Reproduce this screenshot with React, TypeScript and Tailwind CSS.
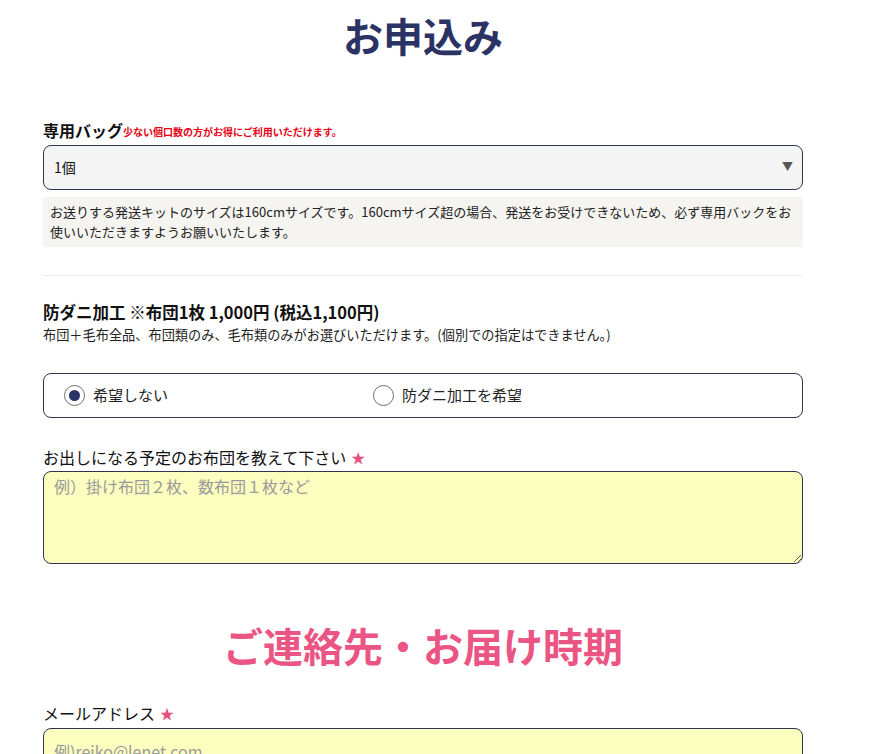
import React from "react";

const jp = "font-['Noto_Sans_CJK_JP','Noto_Sans',sans-serif]";

function Star() {
  return <span className="text-[#e8507e] text-[14px] ml-[5px]">★</span>;
}

function Radio({ checked, label }: { checked?: boolean; label: string }) {
  return (
    <label className="flex items-center gap-[8px] cursor-pointer">
      <span className="w-[21px] h-[21px] rounded-full border border-[#6b6b6b] bg-white flex items-center justify-center">
        {checked && <span className="w-[11px] h-[11px] rounded-full bg-[#2b3264]" />}
      </span>
      <span className="text-[15px] text-[#222]">{label}</span>
    </label>
  );
}

export default function App() {
  return (
    <div className={`min-h-screen bg-white ${jp}`}>
      <div className="w-[760px] ml-[43px] flex flex-col">
        <h1 className="mt-[5px] text-center text-[40px] leading-[60px] font-bold text-[#2b3264]">
          お申込み
        </h1>

        {/* bag */}
        <div className="mt-[55px] flex items-end leading-[20px]">
          <span className="text-[16px] font-bold text-[#111]">専用バッグ</span>
          <span className="text-[10px] font-bold text-[#e60012] leading-[16px]">
            少ない個口数の方がお得にご利用いただけます。
          </span>
        </div>
        <div className="relative mt-[5px]">
          <select className="w-full h-[45px] appearance-none rounded-[8px] border border-[#2f3550] bg-[#f4f4f4] pl-[10px] text-[14px] text-[#111] outline-none">
            <option>1個</option>
            <option>2個</option>
            <option>3個</option>
          </select>
          <span className="pointer-events-none absolute right-[10px] top-[13px] text-[11px] text-[#555]">▼</span>
        </div>
        <div className="mt-[7px] bg-[#f5f4f0] px-[7px] py-[5px] text-[13px] leading-[20px] text-[#222]">
          お送りする発送キットのサイズは160cmサイズです。160cmサイズ超の場合、発送をお受けできないため、必ず専用バックをお使いいただきますようお願いいたします。
        </div>

        <div className="mt-[28px] border-t border-[#eeeeee]" />

        {/* dani */}
        <div className="mt-[25px] text-[16.5px] leading-[22px] font-bold text-[#111]">
          防ダニ加工 ※布団1枚 1,000円 (税込1,100円)
        </div>
        <div className="mt-[2px] text-[13.2px] leading-[20px] text-[#222]">
          布団＋毛布全品、布団類のみ、毛布類のみがお選びいただけます。(個別での指定はできません。)
        </div>
        <div className="mt-[28px] h-[45px] rounded-[8px] border border-[#2f3550] flex items-center pl-[20px]">
          <div className="w-[309px]">
            <Radio checked label="希望しない" />
          </div>
          <Radio label="防ダニ加工を希望" />
        </div>

        {/* futon */}
        <div className="mt-[27px] flex items-center text-[16px] leading-[24px] text-[#111]">
          お出しになる予定のお布団を教えて下さい
          <Star />
        </div>
        <textarea
          className="mt-[2px] block h-[93px] w-full rounded-[8px] border border-[#2f3550] bg-[#fbfebf] px-[10px] py-[3px] text-[16px] leading-[22px] outline-none placeholder:text-[#9a9a9a]"
          placeholder="例）掛け布団２枚、数布団１枚など"
        />

        <h2 className="mt-[51px] text-center text-[40px] leading-[60px] font-bold text-[#ea5583]">
          ご連絡先・お届け時期
        </h2>

        <div className="mt-[26px] flex items-center text-[16px] leading-[24px] text-[#111]">
          メールアドレス
          <Star />
        </div>
        <input
          className="mt-[3px] block h-[45px] w-full rounded-[8px] border border-[#2f3550] bg-[#fbfebf] px-[10px] text-[16px] outline-none placeholder:text-[#9a9a9a]"
          placeholder="例)reiko@lenet.com"
        />
        <div className="h-[40px]" />
      </div>
    </div>
  );
}
